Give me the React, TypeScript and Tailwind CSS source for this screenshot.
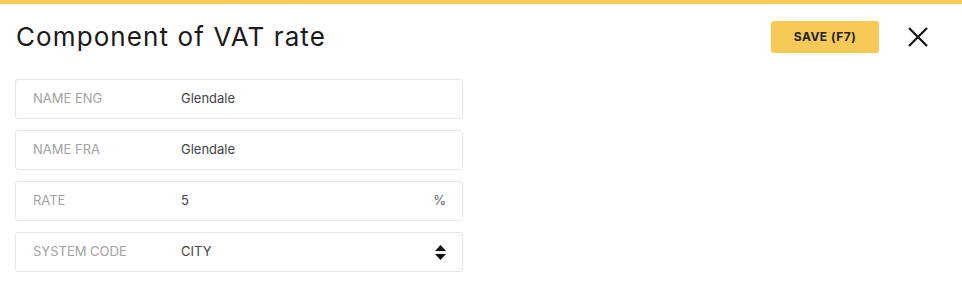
import React from 'react';

const FIELDS = [
    { label: 'NAME ENG', value: 'Glendale' },
    { label: 'NAME FRA', value: 'Glendale' },
    { label: 'RATE', value: '5', suffix: '%' },
    { label: 'SYSTEM CODE', value: 'CITY', select: true },
];

const SortIcon = () => (
    <svg width="11" height="15" viewBox="0 0 11 15">
        <path d="M5.5 0 L11 6 H0 Z" fill="#111" />
        <path d="M0 9 H11 L5.5 15 Z" fill="#111" />
    </svg>
);

const App: React.FC = () => {
    return (
        <div className="w-[962px] h-[308px] bg-white font-['Inter',sans-serif] overflow-hidden">
            {/* Top accent */}
            <div className="h-[4px] bg-[#f7ca57]"></div>

            {/* Header */}
            <div className="flex items-center justify-between pl-[16px] pr-[34px] pt-[17px]">
                <h1 className="text-[26px] leading-[32px] text-[#1a1a1a] font-normal tracking-[1.1px]">Component of VAT rate</h1>
                <div className="flex items-center gap-[29px]">
                    <button className="w-[108px] h-[32px] rounded-[3px] bg-[#f7ca57] text-[12px] font-bold text-[#222] tracking-[0.5px]">
                        SAVE (F7)
                    </button>
                    <svg width="20" height="20" viewBox="0 0 20 20">
                        <path d="M1 1 L19 19 M19 1 L1 19" stroke="#111" strokeWidth="2.2" />
                    </svg>
                </div>
            </div>

            {/* Fields */}
            <div className="flex flex-col gap-[11px] pl-[15px] pt-[26px] w-[463px]">
                {FIELDS.map(f => (
                    <div key={f.label} className="h-[40px] border border-[#e6e6e6] rounded-[3px] flex items-center pl-[17px] pr-[16px] text-[13px]">
                        <span className="w-[148px] text-[#a3a3a3]">{f.label}</span>
                        <span className="flex-1 text-[#444]">{f.value}</span>
                        {f.suffix && <span className="text-[#666]">{f.suffix}</span>}
                        {f.select && <SortIcon />}
                    </div>
                ))}
            </div>
        </div>
    );
};

export default App;
